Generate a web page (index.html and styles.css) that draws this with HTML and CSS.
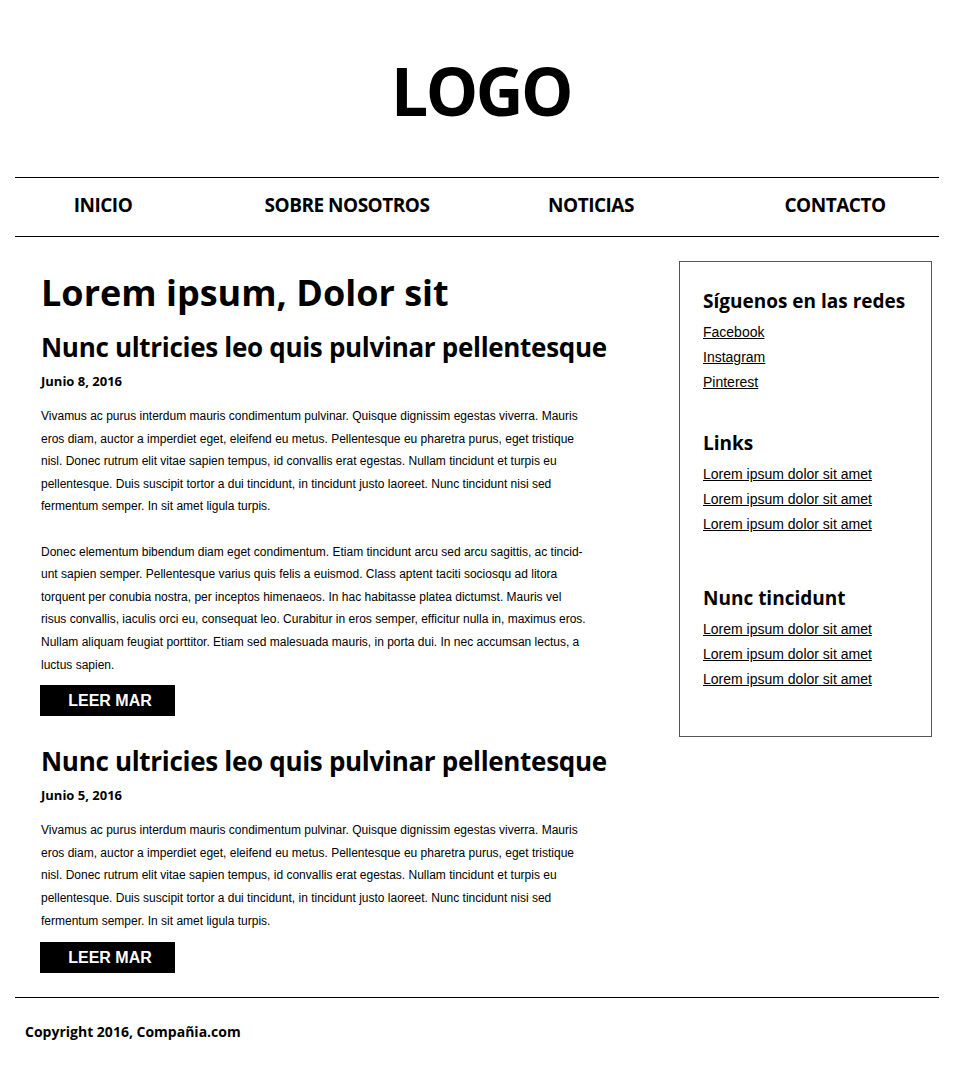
FILE: index.html
```html
<!DOCTYPE html>
<html lang="es">
<head>
<meta charset="utf-8">
<title>LOGO</title>
<link rel="stylesheet" href="styles.css">
</head>
<body>
<header class="site-header">
  <div class="logo">LOGO</div>
</header>
<nav class="main-nav">
  <ul class="nav-list">
    <li><a href="#">INICIO</a></li>
    <li><a href="#">SOBRE NOSOTROS</a></li>
    <li><a href="#">NOTICIAS</a></li>
    <li><a href="#">CONTACTO</a></li>
  </ul>
</nav>
<div class="content">
  <main class="posts">
    <h1 class="page-title">Lorem ipsum, Dolor sit</h1>
    <article class="post">
      <h2 class="post-title">Nunc ultricies leo quis pulvinar pellentesque</h2>
      <p class="post-date">Junio 8, 2016</p>
      <p class="post-text">Vivamus ac purus interdum mauris condimentum pulvinar. Quisque dignissim egestas viverra. Mauris eros diam, auctor a imperdiet eget, eleifend eu metus. Pellentesque eu pharetra purus, eget tristique nisl. Donec rutrum elit vitae sapien tempus, id convallis erat egestas. Nullam tincidunt et turpis eu pellentesque. Duis suscipit tortor a dui tincidunt, in tincidunt justo laoreet. Nunc tincidunt nisi sed fermentum semper. In sit amet ligula turpis.</p>
      <p class="post-text">Donec elementum bibendum diam eget condimentum. Etiam tincidunt arcu sed arcu sagittis, ac tincid-unt sapien semper. Pellentesque varius quis felis a euismod. Class aptent taciti sociosqu ad litora torquent per conubia nostra, per inceptos himenaeos. In hac habitasse platea dictumst. Mauris vel risus convallis, iaculis orci eu, consequat leo. Curabitur in eros semper, efficitur nulla in, maximus eros. Nullam aliquam feugiat porttitor. Etiam sed malesuada mauris, in porta dui. In nec accumsan lectus, a luctus sapien.</p>
      <a class="btn" href="#">LEER MAR</a>
    </article>
    <article class="post">
      <h2 class="post-title">Nunc ultricies leo quis pulvinar pellentesque</h2>
      <p class="post-date">Junio 5, 2016</p>
      <p class="post-text">Vivamus ac purus interdum mauris condimentum pulvinar. Quisque dignissim egestas viverra. Mauris eros diam, auctor a imperdiet eget, eleifend eu metus. Pellentesque eu pharetra purus, eget tristique nisl. Donec rutrum elit vitae sapien tempus, id convallis erat egestas. Nullam tincidunt et turpis eu pellentesque. Duis suscipit tortor a dui tincidunt, in tincidunt justo laoreet. Nunc tincidunt nisi sed fermentum semper. In sit amet ligula turpis.</p>
      <a class="btn" href="#">LEER MAR</a>
    </article>
  </main>
  <aside class="sidebar">
    <section class="widget">
      <h3 class="widget-title">Síguenos en las redes</h3>
      <ul class="widget-links">
        <li><a href="#">Facebook</a></li>
        <li><a href="#">Instagram</a></li>
        <li><a href="#">Pinterest</a></li>
      </ul>
    </section>
    <section class="widget">
      <h3 class="widget-title">Links</h3>
      <ul class="widget-links">
        <li><a href="#">Lorem ipsum dolor sit amet</a></li>
        <li><a href="#">Lorem ipsum dolor sit amet</a></li>
        <li><a href="#">Lorem ipsum dolor sit amet</a></li>
      </ul>
    </section>
    <section class="widget widget-last">
      <h3 class="widget-title">Nunc tincidunt</h3>
      <ul class="widget-links">
        <li><a href="#">Lorem ipsum dolor sit amet</a></li>
        <li><a href="#">Lorem ipsum dolor sit amet</a></li>
        <li><a href="#">Lorem ipsum dolor sit amet</a></li>
      </ul>
    </section>
  </aside>
</div>
<footer class="site-footer">
  <p class="copyright">Copyright 2016, Compañia.com</p>
</footer>
</body>
</html>
```

FILE: styles.css
```css
* { box-sizing: border-box; }
html, body { margin: 0; padding: 0; background: #fff; color: #000; }
body {
  font-family: "Liberation Sans", Arial, sans-serif;
  width: 960px;
}
.site-header {
  height: 177px;
  display: flex;
  justify-content: center;
  padding-top: 51px;
}
.logo {
  font-family: "Open Sans", sans-serif;
  font-weight: 700;
  font-size: 66px;
  line-height: 78px;
  letter-spacing: -2.5px;
  padding-left: 2px;
}
.main-nav {
  margin: 0 21px 0 15px;
  border-top: 1px solid #000;
  border-bottom: 1px solid #000;
  height: 60px;
}
.nav-list {
  list-style: none;
  margin: 0 0 0 -34px;
  padding: 0 0 4px;
  display: grid;
  grid-template-columns: repeat(4, 244px);
  height: 58px;
  align-items: center;
}
.nav-list li { text-align: center; }
.nav-list a {
  font-family: "Open Sans", sans-serif;
  font-weight: 700;
  font-size: 19px;
  letter-spacing: -0.5px;
  color: #000;
  text-decoration: none;
}
.content {
  display: flex;
  justify-content: space-between;
  padding: 24px 28px 0 41px;
}
.posts { width: 600px; }
.page-title {
  font-family: "Open Sans", sans-serif;
  font-weight: 700;
  font-size: 36px;
  line-height: 44px;
  margin: 10px 0 0;
}
.post-title {
  font-family: "Open Sans", sans-serif;
  font-weight: 700;
  font-size: 26px;
  letter-spacing: -0.3px;
  line-height: 34px;
  margin: 15px 0 0;
  white-space: nowrap;
}
.post + .post .post-title { margin-top: 28px; }
.post-date {
  font-family: "Open Sans", sans-serif;
  font-weight: 700;
  font-size: 13px;
  line-height: 18px;
  margin: 8px 0 15px;
}
.post-text {
  font-size: 12px;
  line-height: 22.6px;
  width: 548px;
  margin: 0 0 22.6px;
}
.post-text:last-of-type { margin-bottom: 9px; }
.post + .post .post-text:last-of-type { margin-bottom: 10px; }
.btn {
  display: inline-block;
  width: 135px;
  height: 31px;
  line-height: 31px;
  margin-left: -1px;
  background: #000;
  color: #fff;
  text-align: center;
  font-weight: 700;
  font-size: 16px;
  text-decoration: none;
  padding-left: 5px;
}
.sidebar {
  width: 253px;
  height: 476px;
  border: 1px solid #555;
  padding: 25px 23px 0;
}
.widget-title {
  font-family: "Open Sans", sans-serif;
  font-weight: 700;
  font-size: 19px;
  line-height: 28px;
  margin: 0 0 5px;
}
.widget + .widget { margin-top: 34px; }
.widget + .widget + .widget { margin-top: 47px; }
.widget-links {
  list-style: none;
  margin: 0;
  padding: 0;
}
.widget-links li {
  font-size: 14px;
  line-height: 25px;
}
.widget-links a { color: #000; text-decoration: underline; }
.site-footer {
  margin: 24px 21px 0 15px;
  border-top: 1px solid #000;
  padding: 24px 10px 0;
}
.copyright {
  font-family: "Open Sans", sans-serif;
  font-weight: 700;
  font-size: 14px;
  line-height: 20px;
  margin: 0;
}
```
